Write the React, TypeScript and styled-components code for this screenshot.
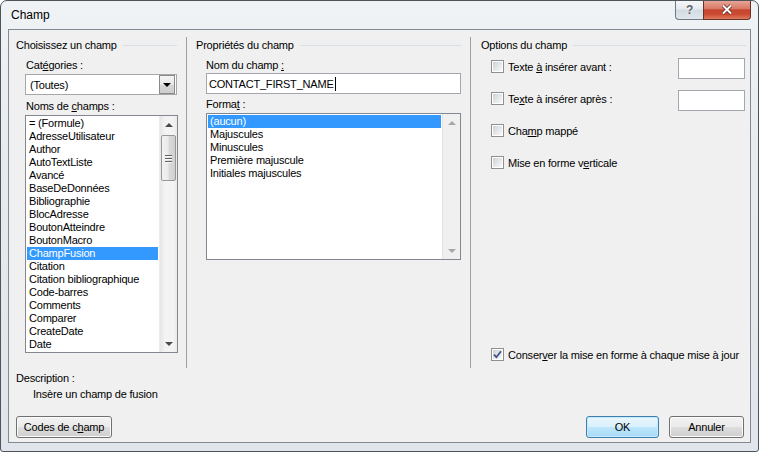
import styled, { createGlobalStyle } from "styled-components";

const GlobalStyle = createGlobalStyle`
  html, body {
    margin: 0;
    padding: 0;
  }
  body {
    background: #ffffff;
    font-family: "Liberation Sans", Arial, sans-serif;
    font-size: 11px;
    letter-spacing: -0.2px;
    color: #000000;
  }
`;

// fenêtre + barre de titre
const Frame = styled.div`
  box-sizing: border-box;
  width: 759px;
  height: 452px;
  border: 1px solid #4e545a;
  border-radius: 7px 7px 3px 3px;
  background: linear-gradient(180deg, #f0f3f6 0%, #e6ebef 35%, #dfe5ea 100%);
  padding: 0 7px 8px 7px;
  display: flex;
  flex-direction: column;
  overflow: hidden;
`;

const TitleBar = styled.div`
  height: 28px;
  display: flex;
  align-items: flex-start;
`;

const Title = styled.div`
  flex: 1;
  padding: 7px 0 0 3px;
  font-size: 12px;
  line-height: 14px;
  letter-spacing: 0;
  color: #000;
`;

const CaptionButtons = styled.div`
  display: flex;
  height: 20px;
  margin-top: -1px;
`;

const HelpButton = styled.div`
  box-sizing: border-box;
  width: 28px;
  height: 20px;
  border: 1px solid #737a82;
  border-top: none;
  border-right: none;
  border-radius: 0 0 0 4px;
  background: linear-gradient(180deg, #f6f8fa 0%, #e6ebf0 48%, #d3dbe2 52%, #dfe6ec 100%);
  display: flex;
  align-items: center;
  justify-content: center;
  font-size: 12px;
  font-weight: bold;
  color: #5b6168;
  text-shadow: 0 0 2px #ffffff;
`;

const CloseButton = styled.div`
  box-sizing: border-box;
  width: 48px;
  height: 20px;
  border: 1px solid #6a3128;
  border-top: none;
  border-radius: 0 0 4px 0;
  background: linear-gradient(180deg, #e9ab9c 0%, #d87a66 45%, #c5452e 52%, #cb4a31 75%, #df7d5e 100%);
  display: flex;
  align-items: center;
  justify-content: center;
`;

const Client = styled.div`
  flex: 1;
  border: 1px solid #838990;
  background: #f0f0f0;
  display: flex;
  flex-direction: column;
`;

// colonnes
const Columns = styled.div`
  display: flex;
  margin-top: 7px;
  height: 331px;
`;

const Pane = styled.div<{ $width: number; $pl: number; $pr: number; $sep?: boolean }>`
  box-sizing: border-box;
  width: ${(p) => p.$width}px;
  padding: 0 ${(p) => p.$pr}px 0 ${(p) => p.$pl}px;
  border-right: ${(p) => (p.$sep ? "1px solid #a0a0a0" : "none")};
  display: flex;
  flex-direction: column;
`;

const GroupHeader = styled.div`
  height: 16px;
  display: flex;
  align-items: center;
  white-space: nowrap;
  &::after {
    content: "";
    flex: 1;
    height: 1px;
    margin-left: 6px;
    background: #d5dfe5;
  }
`;

const FieldLabel = styled.div<{ $mt: number }>`
  margin: ${(p) => p.$mt}px 0 0 10px;
  height: 14px;
  line-height: 14px;
  white-space: nowrap;
`;

const Combo = styled.div`
  box-sizing: border-box;
  width: 152px;
  height: 21px;
  margin: 2px 0 0 9px;
  border: 1px solid #a7a7a7;
  background: #ffffff;
  padding: 1px;
  display: flex;
  align-items: center;
`;

const ComboText = styled.div`
  flex: 1;
  padding-left: 3px;
`;

const ComboButton = styled.div`
  box-sizing: border-box;
  width: 16px;
  height: 19px;
  border: 1px solid #8a8a8a;
  background: linear-gradient(180deg, #f4f4f4 0%, #e8e8e8 50%, #d8d8d8 51%, #cdcdcd 100%);
  display: flex;
  align-items: center;
  justify-content: center;
`;

const Triangle = styled.span<{ $up?: boolean; $color: string }>`
  width: 0;
  height: 0;
  border-left: 4px solid transparent;
  border-right: 4px solid transparent;
  ${(p) =>
    p.$up
      ? `border-bottom: 4px solid ${p.$color};`
      : `border-top: 4px solid ${p.$color};`}
`;

const ListBox = styled.div<{ $w: number; $h: number; $ml: number }>`
  box-sizing: border-box;
  width: ${(p) => p.$w}px;
  height: ${(p) => p.$h}px;
  margin: 2px 0 0 ${(p) => p.$ml}px;
  border: 1px solid #828790;
  background: #ffffff;
  display: flex;
`;

const ListItems = styled.div`
  flex: 1;
  padding: 1px 1px 0 1px;
  overflow: hidden;
`;

const ListItem = styled.div<{ $selected?: boolean }>`
  height: 13px;
  line-height: 13px;
  padding-left: 2px;
  white-space: nowrap;
  background: ${(p) => (p.$selected ? "#3399ff" : "transparent")};
  color: ${(p) => (p.$selected ? "#ffffff" : "#000000")};
`;

const ScrollBar = styled.div<{ $disabled?: boolean }>`
  width: 17px;
  display: flex;
  flex-direction: column;
  background: ${(p) =>
    p.$disabled
      ? "#f0f0f0"
      : "linear-gradient(90deg, #e6e6e6 0%, #f3f3f3 30%, #f3f3f3 80%, #e9e9e9 100%)"};
  border-left: 1px solid ${(p) => (p.$disabled ? "#e3e3e3" : "#ececec")};
`;

const ScrollArrow = styled.div`
  height: 17px;
  display: flex;
  align-items: center;
  justify-content: center;
`;

const ScrollTrack = styled.div`
  flex: 1;
  display: flex;
  flex-direction: column;
  align-items: center;
`;

const ScrollThumb = styled.div<{ $top: number; $h: number }>`
  box-sizing: border-box;
  width: 15px;
  height: ${(p) => p.$h}px;
  margin-top: ${(p) => p.$top}px;
  border: 1px solid #979797;
  border-radius: 2px;
  background: linear-gradient(90deg, #f2f2f2 0%, #eaeaea 45%, #dadada 55%, #d0d0d0 100%);
  display: flex;
  flex-direction: column;
  align-items: center;
  justify-content: center;
  gap: 2px;
`;

const Grip = styled.span`
  width: 7px;
  height: 1px;
  background: #5f5f5f;
  box-shadow: 0 1px 0 #fafafa;
`;

const TextInput = styled.div<{ $w: number; $ml: number; $mt: number; $mr?: number }>`
  box-sizing: border-box;
  width: ${(p) => p.$w}px;
  height: 21px;
  margin: ${(p) => p.$mt}px ${(p) => p.$mr ?? 0}px 0 ${(p) => p.$ml}px;
  border: 1px solid #a4a7ad;
  background: #ffffff;
  display: flex;
  align-items: center;
  padding-left: 2px;
  flex: none;
`;

const Caret = styled.span`
  width: 1px;
  height: 14px;
  background: #000;
  margin-left: 1px;
`;

// options à droite
const Options = styled.div`
  margin-top: 5px;
  display: flex;
  flex-direction: column;
  gap: 11px;
`;

const OptionRow = styled.div`
  height: 21px;
  display: flex;
  align-items: flex-start;
  padding-left: 10px;
`;

const CheckLabel = styled.label`
  flex: 1;
  display: flex;
  align-items: center;
  gap: 4px;
  height: 15px;
  margin-top: 1px;
  white-space: nowrap;
`;

const CheckBox = styled.span`
  box-sizing: border-box;
  width: 13px;
  height: 13px;
  border: 1px solid #8e8f8f;
  background: #ffffff;
  padding: 1px;
  display: flex;
  flex: none;
`;

const CheckInner = styled.span`
  flex: 1;
  background: linear-gradient(135deg, #cdd1d6 0%, #e4e6e9 50%, #f7f7f7 100%);
  display: flex;
  align-items: center;
  justify-content: center;
`;

const KeepRow = styled.div`
  margin-top: auto;
  margin-bottom: 6px;
  padding-left: 10px;
  display: flex;
`;

// bas de page
const Description = styled.div`
  margin-top: 3px;
  padding-left: 7px;
  display: flex;
  flex-direction: column;
  gap: 2px;
  line-height: 14px;
`;

const DescriptionText = styled.div`
  padding-left: 17px;
`;

const ButtonBar = styled.div`
  margin-top: auto;
  padding: 0 6px 4px 7px;
  display: flex;
  justify-content: space-between;
  align-items: flex-end;
`;

const ButtonGroup = styled.div`
  display: flex;
  gap: 10px;
`;

const Button = styled.div<{ $w: number; $default?: boolean }>`
  box-sizing: border-box;
  width: ${(p) => p.$w}px;
  height: 22px;
  border: 1px solid ${(p) => (p.$default ? "#3c7fb1" : "#707070")};
  border-radius: 3px;
  background: ${(p) =>
    p.$default
      ? "linear-gradient(180deg, #eaf6fd 0%, #d9f0fc 48%, #bee6fd 52%, #a7d9f5 100%)"
      : "linear-gradient(180deg, #f2f2f2 0%, #ebebeb 48%, #dddddd 52%, #cfcfcf 100%)"};
  box-shadow: inset 0 0 0 1px ${(p) => (p.$default ? "#c6e9fb" : "#fbfbfb")};
  display: flex;
  align-items: center;
  justify-content: center;
  white-space: nowrap;
`;

const fieldNames = [
  "= (Formule)",
  "AdresseUtilisateur",
  "Author",
  "AutoTextListe",
  "Avancé",
  "BaseDeDonnées",
  "Bibliographie",
  "BlocAdresse",
  "BoutonAtteindre",
  "BoutonMacro",
  "ChampFusion",
  "Citation",
  "Citation bibliographique",
  "Code-barres",
  "Comments",
  "Comparer",
  "CreateDate",
  "Date",
];

const formats = [
  "(aucun)",
  "Majuscules",
  "Minuscules",
  "Première majuscule",
  "Initiales majuscules",
];

const Check = ({ checked }: { checked?: boolean }) => (
  <CheckBox>
    <CheckInner>
      {checked && (
        <svg width="9" height="9" viewBox="0 0 9 9">
          <path
            d="M1 4.6 L3.4 7.2 L8 1.2"
            fill="none"
            stroke="#3e5486"
            strokeWidth="1.8"
          />
        </svg>
      )}
    </CheckInner>
  </CheckBox>
);

const App = () => {
  return (
    <>
      <GlobalStyle />
      <Frame>
        <TitleBar>
          <Title>Champ</Title>
          <CaptionButtons>
            <HelpButton>?</HelpButton>
            <CloseButton>
              <svg width="12" height="11" viewBox="0 0 12 11">
                <path
                  d="M2 1.5 L10 9.5 M10 1.5 L2 9.5"
                  stroke="#5a1d14"
                  strokeWidth="3.4"
                />
                <path
                  d="M2 1.5 L10 9.5 M10 1.5 L2 9.5"
                  stroke="#ffffff"
                  strokeWidth="2"
                />
              </svg>
            </CloseButton>
          </CaptionButtons>
        </TitleBar>

        <Client>
          <Columns>
            <Pane $width={178} $pl={7} $pr={9} $sep>
              <GroupHeader>Choisissez un champ</GroupHeader>
              <FieldLabel $mt={5}>
                Cat<u>é</u>gories :
              </FieldLabel>
              <Combo>
                <ComboText>(Toutes)</ComboText>
                <ComboButton>
                  <Triangle $color="#000" />
                </ComboButton>
              </Combo>
              <FieldLabel $mt={4}>
                Noms de <u>c</u>hamps :
              </FieldLabel>
              <ListBox $w={153} $h={238} $ml={9}>
                <ListItems>
                  {fieldNames.map((name) => (
                    <ListItem key={name} $selected={name === "ChampFusion"}>
                      {name}
                    </ListItem>
                  ))}
                </ListItems>
                <ScrollBar>
                  <ScrollArrow>
                    <Triangle $up $color="#4a4a4a" />
                  </ScrollArrow>
                  <ScrollTrack>
                    <ScrollThumb $top={2} $h={46}>
                      <Grip />
                      <Grip />
                      <Grip />
                    </ScrollThumb>
                  </ScrollTrack>
                  <ScrollArrow>
                    <Triangle $color="#4a4a4a" />
                  </ScrollArrow>
                </ScrollBar>
              </ListBox>
            </Pane>

            <Pane $width={284} $pl={9} $pr={9} $sep>
              <GroupHeader>Propriétés du champ</GroupHeader>
              <FieldLabel $mt={5}>
                Nom du champ <u>:</u>
              </FieldLabel>
              <TextInput $w={255} $ml={10} $mt={1}>
                CONTACT_FIRST_NAME
                <Caret />
              </TextInput>
              <FieldLabel $mt={3}>
                Forma<u>t</u> :
              </FieldLabel>
              <ListBox $w={255} $h={147} $ml={10}>
                <ListItems>
                  {formats.map((f, i) => (
                    <ListItem key={f} $selected={i === 0}>
                      {f}
                    </ListItem>
                  ))}
                </ListItems>
                <ScrollBar $disabled>
                  <ScrollArrow>
                    <Triangle $up $color="#a8a8a8" />
                  </ScrollArrow>
                  <ScrollTrack />
                  <ScrollArrow>
                    <Triangle $color="#a8a8a8" />
                  </ScrollArrow>
                </ScrollBar>
              </ListBox>
            </Pane>

            <Pane $width={279} $pl={10} $pr={4}>
              <GroupHeader>Options du champ</GroupHeader>
              <Options>
                <OptionRow>
                  <CheckLabel>
                    <Check />
                    <span>
                      Texte <u>à</u> insérer avant :
                    </span>
                  </CheckLabel>
                  <TextInput $w={67} $ml={0} $mt={0} $mr={1} />
                </OptionRow>
                <OptionRow>
                  <CheckLabel>
                    <Check />
                    <span>
                      Te<u>x</u>te à insérer après :
                    </span>
                  </CheckLabel>
                  <TextInput $w={67} $ml={0} $mt={0} $mr={1} />
                </OptionRow>
                <OptionRow>
                  <CheckLabel>
                    <Check />
                    <span>
                      Cha<u>m</u>p mappé
                    </span>
                  </CheckLabel>
                </OptionRow>
                <OptionRow>
                  <CheckLabel>
                    <Check />
                    <span>
                      Mise en forme v<u>e</u>rticale
                    </span>
                  </CheckLabel>
                </OptionRow>
              </Options>
              <KeepRow>
                <CheckLabel>
                  <Check checked />
                  <span>
                    Conser<u>v</u>er la mise en forme à chaque mise à jour
                  </span>
                </CheckLabel>
              </KeepRow>
            </Pane>
          </Columns>

          <Description>
            <div>Description :</div>
            <DescriptionText>Insère un champ de fusion</DescriptionText>
          </Description>

          <ButtonBar>
            <Button $w={96}>
              Codes de c<u>h</u>amp
            </Button>
            <ButtonGroup>
              <Button $w={73} $default>
                OK
              </Button>
              <Button $w={75}>Annuler</Button>
            </ButtonGroup>
          </ButtonBar>
        </Client>
      </Frame>
    </>
  );
};

export default App;
